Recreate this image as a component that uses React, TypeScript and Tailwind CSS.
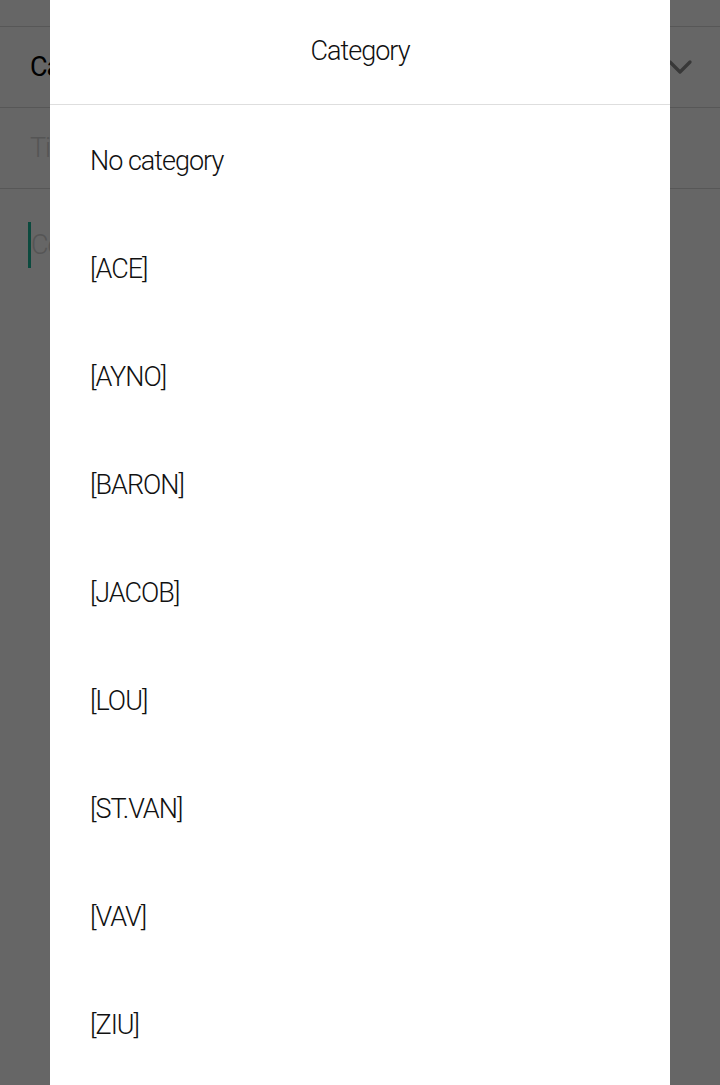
import * as React from 'react';
import { ChevronDown } from 'lucide-react';

const categories = ['No category', '[ACE]', '[AYNO]', '[BARON]', '[JACOB]', '[LOU]', '[ST.VAN]', '[VAV]', '[ZIU]'];

export default function App() {
  return (
    <div className="relative h-[1085px] w-[720px] overflow-hidden bg-white font-['Roboto',sans-serif] font-light tracking-[-1px]">
      {/* note editor behind the dialog */}
      <div className="flex flex-col">
        <div className="h-[27px] border-b border-[#dadada]" />
        <div className="flex h-[81px] items-center justify-between border-b border-[#dadada] pl-[30px] pr-[20px]">
          <span className="text-[27px] font-normal text-black">Category</span>
          <ChevronDown className="h-10 w-10 text-[#8c8c8c]" strokeWidth={2} />
        </div>
        <div className="flex h-[81px] items-center border-b border-[#dadada] pl-[30px]">
          <span className="text-[27px] text-[#d4d4d4]">Title</span>
        </div>
        <div className="flex items-start pl-[28px] pt-[33px]">
          <span className="h-[46px] w-[3px] bg-[#1cb99b]" />
          <span className="text-[27px] leading-[46px] text-[#d4d4d4]">Content</span>
        </div>
      </div>

      <div className="absolute inset-0 bg-black/60" />

      <div className="absolute bottom-0 left-[50px] top-0 flex w-[620px] flex-col bg-white">
        <div className="flex h-[105px] shrink-0 items-center justify-center border-b border-[#dedede] pb-[2px]">
          <span className="text-[27px] text-[#111]">Category</span>
        </div>
        <div className="flex flex-col">
          {categories.map((c) => (
            <div key={c} className="flex h-[108px] shrink-0 items-center px-10 pt-[4px]">
              <span className="text-[27px] text-[#111]">{c}</span>
            </div>
          ))}
        </div>
      </div>
    </div>
  );
}
